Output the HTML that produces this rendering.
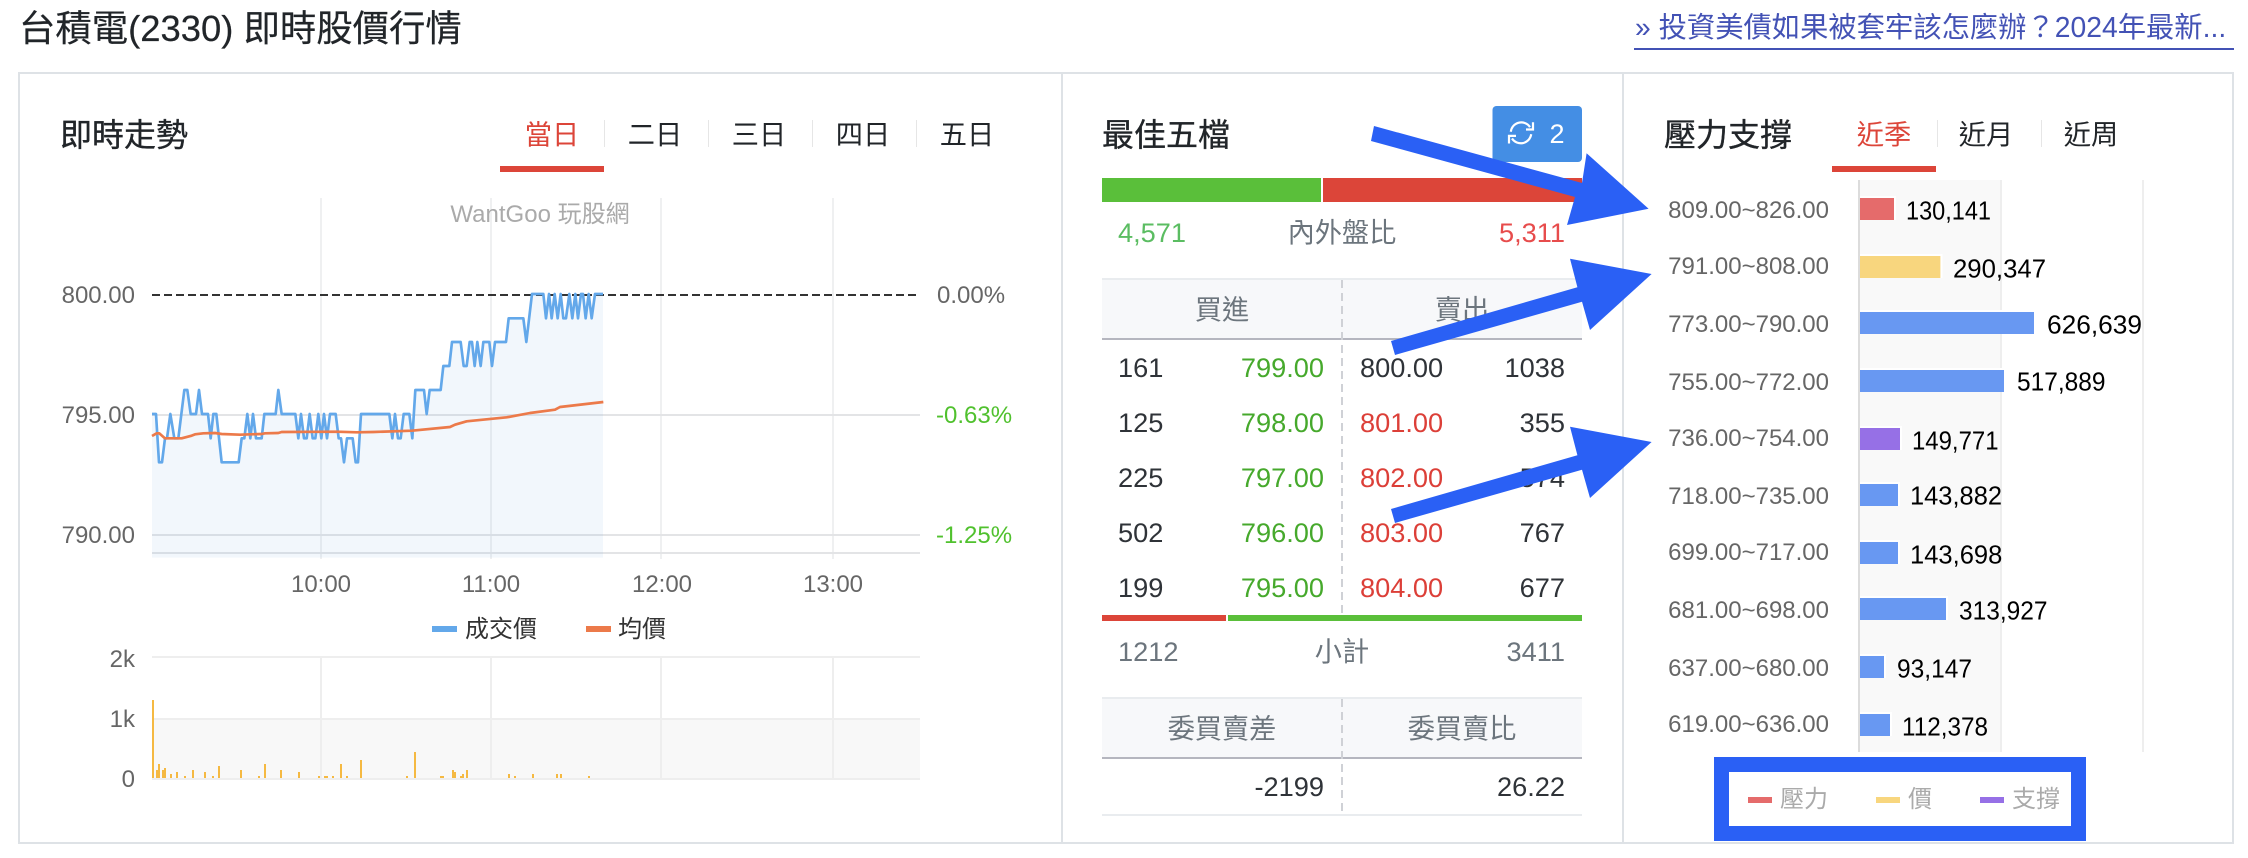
<!DOCTYPE html>
<html lang="zh-Hant"><head><meta charset="utf-8"><title>台積電(2330) 即時股價行情</title>
<style>
html,body{margin:0;padding:0;background:#fff}
svg{display:block}
text{font-family:"Liberation Sans","Noto Sans CJK TC",sans-serif}
.m{text-anchor:middle}.e{text-anchor:end}
.h{font-size:32px;fill:#212529;stroke:#212529;stroke-width:.35px}
.t{font-size:27.2px;fill:#212529;text-anchor:middle}
.a{font-size:24px;fill:#666}
.v{font-size:26px;fill:#000}
.b{font-size:27.2px}
.k{fill:#2f3338}.g{fill:#46a92c}.r{fill:#dc3f38}.s{fill:#6c757d}
</style></head><body>
<svg width="2248" height="858" viewBox="0 0 2248 858" xmlns="http://www.w3.org/2000/svg">
<rect width="2248" height="858" fill="#fff"/>
<text x="19" y="41" font-size="36.4" fill="#212529" stroke="#212529" stroke-width=".2">台積電(2330) 即時股價行情</text>
<text x="1635" y="37" font-size="28.3" fill="#4352b5">» 投資美債如果被套牢該怎麼辦？2024年最新...</text>
<rect x="1634" y="48" width="600" height="2" fill="#4352b5"/>

<rect x="19" y="73" width="2214" height="770" fill="#fff" stroke="#dee2e6" stroke-width="2"/>
<rect x="1061" y="73" width="2" height="770" fill="#dee2e6"/>
<rect x="1622" y="73" width="2" height="770" fill="#dee2e6"/>

<!-- panel 1 -->
<text x="60" y="146" class="h">即時走勢</text>
<text x="552" y="144" class="t" style="fill:#dc4539">當日</text>
<text x="655" y="144" class="t">二日</text>
<text x="759" y="144" class="t">三日</text>
<text x="863" y="144" class="t">四日</text>
<text x="967" y="144" class="t">五日</text>
<rect x="500" y="166" width="104" height="6" fill="#dc4539"/>
<g fill="#e6e6e6"><rect x="604" y="120" width="1" height="27"/><rect x="708" y="120" width="1" height="27"/><rect x="812" y="120" width="1" height="27"/><rect x="916" y="120" width="1" height="27"/></g>

<path d="M321 198V559M491 198V559M661 198V559M833 198V559" stroke="#eff0f1" stroke-width="2" fill="none"/>
<path d="M152 415H920M152 535H920M152 553H920" stroke="#e3e4e6" stroke-width="2" fill="none"/>
<text x="540" y="222" class="m" font-size="24" fill="#aaa">WantGoo 玩股網</text>

<g transform="translate(140,280) scale(0.33333)">
<polygon fill="#7fb5e0" fill-opacity=".1" points="36,833 36,402 48,402 57,547 66,547 75,475 81,475 91,402 103,475 115,475 133,330 142,330 152,402 168,402 177,330 186,402 204,402 212,475 220,402 229,402 245,547 296,547 305,475 313,475 322,402 331,475 339,402 348,475 365,475 373,402 407,402 415,330 425,402 466,402 475,475 483,402 492,475 500,475 509,402 518,475 526,475 535,402 544,475 552,402 561,475 570,402 587,402 596,475 603,475 612,547 621,475 638,475 647,547 654,547 663,402 748,402 757,475 765,402 774,475 782,475 791,402 808,402 817,475 826,330 852,330 860,402 869,330 902,330 910,258 928,258 936,186 962,186 971,258 980,258 989,186 996,186 1004,258 1012,186 1022,258 1030,186 1048,186 1056,258 1065,186 1098,186 1106,115 1150,115 1159,186 1176,42 1210,42 1218,115 1227,42 1235,115 1244,42 1253,115 1262,42 1270,115 1278,115 1288,42 1297,115 1306,42 1314,115 1323,42 1329,42 1337,115 1346,42 1355,115 1365,42 1389,42 1389,833"/>
</g>
<path d="M152 295H920" stroke="#333" stroke-width="2" stroke-dasharray="8 4" fill="none"/>
<g transform="translate(140,280) scale(0.33333)" fill="none" stroke-linejoin="round">
<polyline stroke="#63a8ea" stroke-width="8" points="36,402 48,402 57,547 66,547 75,475 81,475 91,402 103,475 115,475 133,330 142,330 152,402 168,402 177,330 186,402 204,402 212,475 220,402 229,402 245,547 296,547 305,475 313,475 322,402 331,475 339,402 348,475 365,475 373,402 407,402 415,330 425,402 466,402 475,475 483,402 492,475 500,475 509,402 518,475 526,475 535,402 544,475 552,402 561,475 570,402 587,402 596,475 603,475 612,547 621,475 638,475 647,547 654,547 663,402 748,402 757,475 765,402 774,475 782,475 791,402 808,402 817,475 826,330 852,330 860,402 869,330 902,330 910,258 928,258 936,186 962,186 971,258 980,258 989,186 996,186 1004,258 1012,186 1022,258 1030,186 1048,186 1056,258 1065,186 1098,186 1106,115 1150,115 1159,186 1176,42 1210,42 1218,115 1227,42 1235,115 1244,42 1253,115 1262,42 1270,115 1278,115 1288,42 1297,115 1306,42 1314,115 1323,42 1329,42 1337,115 1346,42 1355,115 1365,42 1389,42"/>
<polyline stroke="#ec7a4a" stroke-width="8" points="36,468 50,460 58,460 75,475 125,475 155,467 165,463 190,460 225,459 245,462 300,464 365,462 375,460 415,459 425,456 590,455 650,457 700,456 816,452 930,441 945,434 980,424 1100,412 1170,399 1245,389 1260,381 1390,366"/>
</g>

<g class="a">
<text x="135" y="303" class="a e">800.00</text>
<text x="135" y="423" class="a e">795.00</text>
<text x="135" y="543" class="a e">790.00</text>
<text x="937" y="303" class="a">0.00%</text>
<text x="936" y="423" class="a" style="fill:#50c12e">-0.63%</text>
<text x="936" y="543" class="a" style="fill:#50c12e">-1.25%</text>
<text x="321" y="592" class="a m">10:00</text>
<text x="491" y="592" class="a m">11:00</text>
<text x="662" y="592" class="a m">12:00</text>
<text x="833" y="592" class="a m">13:00</text>
</g>
<rect x="432" y="626" width="25" height="6" fill="#63a8ea"/>
<text x="465" y="637" font-size="24" fill="#333">成交價</text>
<rect x="586" y="626" width="25" height="6" fill="#ec7a4a"/>
<text x="618" y="637" font-size="24" fill="#333">均價</text>

<!-- volume -->
<rect x="152" y="719" width="768" height="60" fill="#f8f8f8"/>
<path d="M152 657H920M152 719H920M152 779H920M321 657V779M491 657V779M661 657V779M833 657V779" stroke="#eee" stroke-width="2" fill="none"/>
<text x="135" y="667" class="a e">2k</text>
<text x="135" y="727" class="a e">1k</text>
<text x="135" y="787" class="a e">0</text>
<g transform="translate(140,640) scale(0.33333)">
<path fill="#f5b942" d="M36 180h6V414h-6zM48 390h6V414h-6zM54 372h6V414h-6zM66 390h6V414h-6zM72 384h6V414h-6zM90 402h6V414h-6zM108 396h6V414h-6zM132 408h6V414h-6zM156 390h6V414h-6zM192 396h6V414h-6zM216 408h6V414h-6zM234 378h6V414h-6zM300 390h6V414h-6zM354 408h6V414h-6zM372 372h6V414h-6zM420 390h6V414h-6zM474 396h6V414h-6zM534 408h6V414h-6zM552 408h12V414h-12zM576 408h6V414h-6zM600 372h6V414h-6zM618 408h6V414h-6zM660 360h6V414h-6zM798 408h6V414h-6zM822 336h6V414h-6zM900 408h12V414h-12zM936 390h6V414h-6zM942 396h6V414h-6zM960 408h6V414h-6zM966 402h6V414h-6zM978 390h6V414h-6zM1104 402h6V414h-6zM1122 408h6V414h-6zM1176 402h6V414h-6zM1248 402h6V414h-6zM1260 402h6V414h-6zM1344 408h6V414h-6z"/>
</g>

<!-- panel 2 -->
<text x="1102" y="146" class="h">最佳五檔</text>
<rect x="1492.5" y="106" width="89.5" height="56" rx="4" fill="#448ee4"/>
<g transform="translate(1521,132.7)" fill="none" stroke="#fff" stroke-width="2.2">
<path d="M-10.2,-1 A10.5,10.5 0 0 1 9,-5.6"/><path d="M12,-10.5V-3.2H5"/>
<path d="M10.2,1.5 A10.5,10.5 0 0 1 -9,5.8"/><path d="M-12,10.8V3.2H-5"/>
</g>
<text x="1557" y="143" class="m" font-size="27" fill="#fff">2</text>
<rect x="1102" y="178" width="219" height="24" fill="#5abf3a"/>
<rect x="1323" y="178" width="259" height="24" fill="#dc4539"/>
<text x="1118" y="242" class="b" style="fill:#5bbd62">4,571</text>
<text x="1342" y="242" class="b m s">內外盤比</text>
<text x="1565" y="242" class="b e" style="fill:#e74c4c">5,311</text>

<rect x="1102" y="278" width="480" height="61" fill="#f7f8fa"/>
<rect x="1102" y="278" width="480" height="2" fill="#e9ecef"/>
<rect x="1102" y="338" width="480" height="2" fill="#b5b6bf"/>
<text x="1222" y="319" class="b m s">買進</text>
<text x="1462" y="319" class="b m s">賣出</text>
<g>
<text x="1118" y="377" class="b k">161</text><text x="1324" y="377" class="b e g">799.00</text><text x="1360" y="377" class="b k">800.00</text><text x="1565" y="377" class="b e k">1038</text>
<text x="1118" y="432" class="b k">125</text><text x="1324" y="432" class="b e g">798.00</text><text x="1360" y="432" class="b r">801.00</text><text x="1565" y="432" class="b e k">355</text>
<text x="1118" y="487" class="b k">225</text><text x="1324" y="487" class="b e g">797.00</text><text x="1360" y="487" class="b r">802.00</text><text x="1565" y="487" class="b e k">574</text>
<text x="1118" y="542" class="b k">502</text><text x="1324" y="542" class="b e g">796.00</text><text x="1360" y="542" class="b r">803.00</text><text x="1565" y="542" class="b e k">767</text>
<text x="1118" y="597" class="b k">199</text><text x="1324" y="597" class="b e g">795.00</text><text x="1360" y="597" class="b r">804.00</text><text x="1565" y="597" class="b e k">677</text>
</g>
<rect x="1102" y="615" width="124" height="6" fill="#dc4539"/>
<rect x="1228" y="615" width="354" height="6" fill="#5abf3a"/>
<text x="1118" y="661" class="b s">1212</text>
<text x="1342" y="661" class="b m s">小計</text>
<text x="1565" y="661" class="b e s">3411</text>

<rect x="1102" y="697" width="480" height="61" fill="#f7f8fa"/>
<rect x="1102" y="697" width="480" height="2" fill="#e9ecef"/>
<rect x="1102" y="757" width="480" height="2" fill="#b5b6bf"/>
<text x="1222" y="738" class="b m s">委買賣差</text>
<text x="1462" y="738" class="b m s">委買賣比</text>
<text x="1324" y="796" class="b e k">-2199</text>
<text x="1565" y="796" class="b e k">26.22</text>
<rect x="1102" y="814" width="480" height="2" fill="#e9ecef"/>
<path d="M1342 280V615M1342 699V814" stroke="#cfd1d6" stroke-width="2" stroke-dasharray="8 5" fill="none"/>

<!-- panel 3 -->
<text x="1664" y="146" class="h">壓力支撐</text>
<text x="1884" y="144" class="t" style="fill:#dc4539">近季</text>
<text x="1986" y="144" class="t">近月</text>
<text x="2091" y="144" class="t">近周</text>
<rect x="1832" y="166" width="104" height="6" fill="#dc4539"/>
<g fill="#e6e6e6"><rect x="1937" y="120" width="1" height="27"/><rect x="2041" y="120" width="1" height="27"/></g>

<rect x="1859" y="180" width="142" height="572" fill="#f9f9f9"/>
<path d="M1859 180V752" stroke="#dcdcdc" stroke-width="2"/>
<path d="M2001 180V752M2143 180V752" stroke="#eee" stroke-width="2"/>
<path fill="#fff" d="M1860 196h36v24h-36zM1860 254h82.4v24h-82.4zM1860 310h176v24h-176zM1860 368h146v24h-146zM1860 426h42v24h-42zM1860 482h40v24h-40zM1860 540h40v24h-40zM1860 596h88v24h-88zM1860 654h26v24h-26zM1860 712h32v24h-32z"/>
<g>
<rect x="1860" y="198" width="34" height="22" fill="#e56b6b"/>
<rect x="1860" y="256" width="80.4" height="22" fill="#f8d67e"/>
<rect x="1860" y="312" width="174" height="22" fill="#6898f2"/>
<rect x="1860" y="370" width="144" height="22" fill="#6898f2"/>
<rect x="1860" y="428" width="40" height="22" fill="#9670e6"/>
<rect x="1860" y="484" width="38" height="22" fill="#6898f2"/>
<rect x="1860" y="542" width="38" height="22" fill="#6898f2"/>
<rect x="1860" y="598" width="86" height="22" fill="#6898f2"/>
<rect x="1860" y="656" width="24" height="22" fill="#6898f2"/>
<rect x="1860" y="714" width="30" height="22" fill="#6898f2"/>
</g>
<g>
<text x="1829" y="218" class="a e">809.00~826.00</text>
<text x="1829" y="274" class="a e">791.00~808.00</text>
<text x="1829" y="332" class="a e">773.00~790.00</text>
<text x="1829" y="390" class="a e">755.00~772.00</text>
<text x="1829" y="446" class="a e">736.00~754.00</text>
<text x="1829" y="504" class="a e">718.00~735.00</text>
<text x="1829" y="560" class="a e">699.00~717.00</text>
<text x="1829" y="618" class="a e">681.00~698.00</text>
<text x="1829" y="676" class="a e">637.00~680.00</text>
<text x="1829" y="732" class="a e">619.00~636.00</text>
</g>
<g>
<text x="1906" y="219.5" class="v" textLength="85" lengthAdjust="spacingAndGlyphs">130,141</text>
<text x="1953" y="277.5" class="v" textLength="93" lengthAdjust="spacingAndGlyphs">290,347</text>
<text x="2047" y="333.5" class="v" textLength="95" lengthAdjust="spacingAndGlyphs">626,639</text>
<text x="2017" y="390.5" class="v" textLength="88.5" lengthAdjust="spacingAndGlyphs">517,889</text>
<text x="1912" y="449.5" class="v" textLength="86.5" lengthAdjust="spacingAndGlyphs">149,771</text>
<text x="1910" y="504.5" class="v" textLength="92" lengthAdjust="spacingAndGlyphs">143,882</text>
<text x="1910" y="563.5" class="v" textLength="92.3" lengthAdjust="spacingAndGlyphs">143,698</text>
<text x="1959" y="619.5" class="v" textLength="88.5" lengthAdjust="spacingAndGlyphs">313,927</text>
<text x="1897" y="677.5" class="v" textLength="75" lengthAdjust="spacingAndGlyphs">93,147</text>
<text x="1902" y="735.5" class="v" textLength="86" lengthAdjust="spacingAndGlyphs">112,378</text>
</g>

<!-- overlay legend -->
<rect x="1714" y="757" width="372" height="84" fill="#2a60f5"/>
<rect x="1729" y="772" width="342" height="54" fill="#fff"/>
<rect x="1748" y="797" width="24" height="6" fill="#e56b6b"/>
<text x="1780" y="807" font-size="24" fill="#aaa">壓力</text>
<rect x="1876" y="797" width="24" height="6" fill="#f8d67e"/>
<text x="1908" y="807" font-size="24" fill="#aaa">價</text>
<rect x="1980" y="797" width="24" height="6" fill="#9670e6"/>
<text x="2012" y="807" font-size="24" fill="#aaa">支撐</text>

<!-- arrows -->
<g fill="#2a60f5">
<polygon points="1374,126 1582,183 1586.6,153.3 1648.6,208.7 1567,225 1575,197 1371,141"/>
<polygon points="1391,341 1577.4,287.3 1570,258.7 1651.6,274 1590,330 1582,301.7 1395,355"/>
<polygon points="1391,509 1577.4,455.3 1570,426.7 1651.6,442 1590,498 1582,469.7 1395,523"/>
</g>
</svg>
</body></html>
